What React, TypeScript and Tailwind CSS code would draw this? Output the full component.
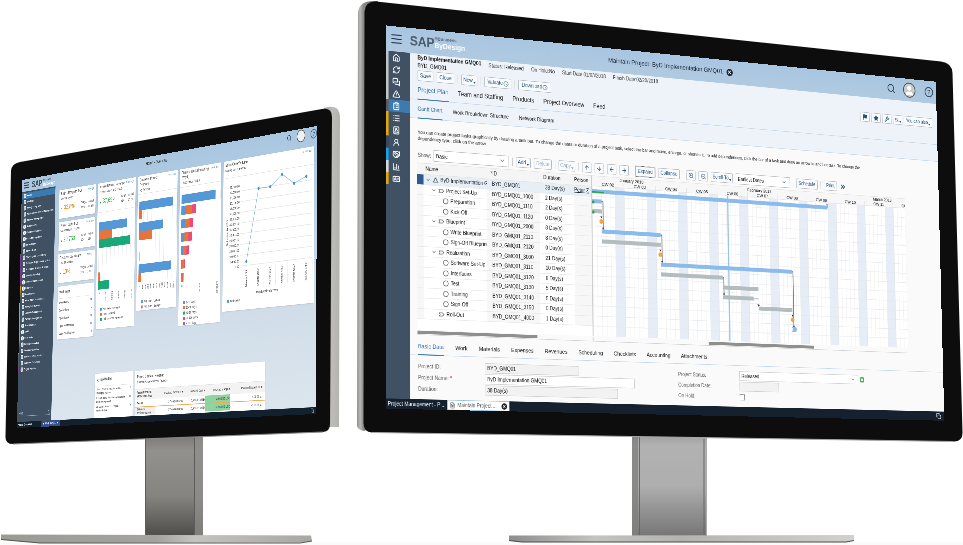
import type { CSSProperties, ReactNode } from "react";
import {
  BarChart3, BookUser, ChevronDown, ChevronsRight, ClipboardList, Clock, Copy, FileText, Flag, Home, IdCard, List,
  ArrowDown, ArrowLeft, ArrowRight, ArrowUp, Handshake, MessagesSquare, RefreshCw, Search, Settings2, Star, User, UserRound,
  Wrench, X, ZoomIn, ZoomOut, TriangleAlert,
} from "lucide-react";

type Point = [number, number];

const SCREEN_W = 1280;
const SCREEN_H = 720;

/** Perspective matrix that lays the flat desktop onto the four corners of a tilted monitor. */
function perspective([p0, p1, p2, p3]: Point[]): CSSProperties {
  const dx1 = p1[0] - p2[0];
  const dx2 = p3[0] - p2[0];
  const sx = p0[0] - p1[0] + p2[0] - p3[0];
  const dy1 = p1[1] - p2[1];
  const dy2 = p3[1] - p2[1];
  const sy = p0[1] - p1[1] + p2[1] - p3[1];
  const den = dx1 * dy2 - dx2 * dy1;
  const g = (sx * dy2 - dx2 * sy) / den;
  const h = (dx1 * sy - sx * dy1) / den;
  const w = SCREEN_W;
  const t = SCREEN_H;
  const m = [
    (p1[0] - p0[0] + g * p1[0]) / w, (p1[1] - p0[1] + g * p1[1]) / w, 0, g / w,
    (p3[0] - p0[0] + h * p3[0]) / t, (p3[1] - p0[1] + h * p3[1]) / t, 0, h / t,
    0, 0, 1, 0,
    p0[0], p0[1], 0, 1,
  ];
  return { transform: `matrix3d(${m.join(",")})` };
}

const LEFT_QUAD: Point[] = [[22, 180], [317, 126], [316, 414], [17, 428]];
const RIGHT_QUAD: Point[] = [[385.6, 25.4], [935.7, 81.7], [944.3, 420.7], [385.7, 408.7]];

/* ------------------------------------------------------------------ */
/* Monitor hardware                                                    */
/* ------------------------------------------------------------------ */

function Hardware() {
  return (
    <svg className="absolute inset-0" width="963" height="545" viewBox="0 0 963 545" aria-hidden="true">
      <defs>
        <linearGradient id="neckL" x1="0" y1="0" x2="0" y2="1">
          <stop offset="0" stopColor="#7c7b79" />
          <stop offset="0.15" stopColor="#92918e" />
          <stop offset="0.6" stopColor="#85847f" />
          <stop offset="1" stopColor="#4e4d4a" />
        </linearGradient>
        <linearGradient id="neckR" x1="0" y1="0" x2="0" y2="1">
          <stop offset="0" stopColor="#a2a2a2" />
          <stop offset="0.1" stopColor="#b2b2b2" />
          <stop offset="0.5" stopColor="#aeaeae" />
          <stop offset="1" stopColor="#767676" />
        </linearGradient>
        <linearGradient id="edgeL" x1="0" y1="0" x2="1" y2="0">
          <stop offset="0" stopColor="#a3a19e" />
          <stop offset="0.5" stopColor="#bebcb9" />
          <stop offset="1" stopColor="#b4b2af" />
        </linearGradient>
        <linearGradient id="edgeR" x1="0" y1="0" x2="1" y2="0">
          <stop offset="0" stopColor="#8c8c8a" />
          <stop offset="0.15" stopColor="#b9b9b7" />
          <stop offset="0.3" stopColor="#8a8a88" />
          <stop offset="1" stopColor="#6a6a68" />
        </linearGradient>
        <linearGradient id="baseL" x1="0" y1="0" x2="1" y2="0">
          <stop offset="0" stopColor="#9b9b96" />
          <stop offset="0.5" stopColor="#a4a39f" />
          <stop offset="0.62" stopColor="#c4c3c0" />
          <stop offset="1" stopColor="#a8a7a3" />
        </linearGradient>
        <linearGradient id="baseR" x1="0" y1="0" x2="1" y2="0">
          <stop offset="0" stopColor="#8d8d8d" />
          <stop offset="0.25" stopColor="#c3c3c2" />
          <stop offset="0.5" stopColor="#b4b3b2" />
          <stop offset="1" stopColor="#d2d1cf" />
        </linearGradient>
      </defs>

      <rect x="0" y="542" width="963" height="3" fill="#fafafa" />
      <rect x="145" y="436" width="58" height="100" fill="url(#neckL)" />
      <rect x="194" y="436" width="9" height="100" fill="#8f8e8b" opacity="0.75" />
      <path d="M145.5 437V535M194.5 437V535" stroke="#5d5c5a" />
      <path d="M1 534.500L311 535.500L312 541L300 542.500L40 543L1 539.500Z" fill="url(#baseL)" />
      <path d="M1 539.500L40 543L300 543L312 541" stroke="#55544f" fill="none" />

      <rect x="632" y="436" width="75" height="100" fill="url(#neckR)" />
      <rect x="632" y="436" width="6" height="100" fill="#80807e" opacity="0.8" />
      <path d="M639.500 437V535M704 439V535" stroke="#666" />
      <path d="M706.500 439V535" stroke="#aaa" />
      <path d="M509 535.500L854 535L854 540L848 542H522L509 540.500Z" fill="url(#baseR)" />
      <path d="M509 540.500L522 542H846L854 540.500" stroke="#4a4a48" fill="none" />

      <path d="M324 108Q340 103 340 118L339 427H326Z" fill="url(#edgeL)" />
      <path d="M20 162L322 109Q332 107.500 332 117L330 424Q330 431.500 323 432L13 444Q5 444 5.500 436L11 171Q11.500 163.500 20 162Z" fill="#0d0d0d" />
      <path d="M13 444L323 432" stroke="#8b8a88" fill="none" />

      <path d="M374 1Q358 1 358 14L357 426Q358 430 364 431L372 428L378 1Z" fill="url(#edgeR)" />
      <path d="M376 1.500L941 61.500Q952 63 952.500 73L962.500 433Q962.500 442 953 441.500L372 432.500Q363.500 432 363.500 423L364.500 12Q365 1 376 1.500Z" fill="#0d0d0d" />
      <path d="M372 432.500L953 441.500" stroke="#a9a9a9" fill="none" />
    </svg>
  );
}

/* ------------------------------------------------------------------ */
/* Left monitor: overview dashboard                                    */
/* ------------------------------------------------------------------ */

const LEFT_NAV = [
  "Home", "Worklists", "Managing My Area", "Application and User Management", "Account Management", "Sales Orders",
  "Customer Invoicing", "Project Management", "Project Team", "Service Desk", "Sourcing and Contracting",
  "Purchase Requests and Orders", "Goods and Services Receipts", "Supplier Invoicing", "Financial Management", "Programs",
  "Receivables", "Fixed Asset Accounting", "Managing Payables", "Liquidity Management", "Payment Management",
  "General Ledger", "Audit", "Cost Tasks", "Inventory Valuation", "Company Structure", "Business Event Monitor",
  "Business Framework", "Project Portfolio",
];

function leftStripe(i: number) {
  if (i === 28 || (i >= 10 && i < 15)) return "bg-[#7b3a94]";
  if (i >= 5 && i < 8) return "bg-[#1b9bdc]";
  if (i >= 15 && i < 26) return "bg-[#d9a20b]";
  return "bg-[#52606e]";
}

function LeftSidebar() {
  return (
    <nav aria-label="Work centers" className="flex w-[167px] shrink-0 flex-col bg-[#3f5163] pt-1 text-white">
      {LEFT_NAV.map((label, i) => (
        <a key={label} href="#home" className={`flex h-[18px] items-center gap-1 text-[8px] font-bold whitespace-nowrap ${i === 0 ? "bg-[#3a7bb0]" : ""}`}>
          <span className={`h-full w-1 shrink-0 ${leftStripe(i)}`} />
          <span className="ml-1 h-3 w-3 shrink-0 rounded-sm border-2 border-white bg-[#b9c5d0]" />
          {label}
        </a>
      ))}
      <label className="mx-2 mt-auto mb-4 flex items-center border-b border-[#9fb0c0] text-[10px]">
        <input aria-label="Find" placeholder="Find" className="w-full bg-transparent text-white outline-none placeholder:text-[#c4d0da]" />
        <Search size={12} />
      </label>
    </nav>
  );
}

interface CardProps {
  title: string;
  sub?: string;
  children?: ReactNode;
  className?: string;
  header?: string;
  time?: boolean;
}

function Card({ title, sub, children, className = "", header = "h-[38px]", time = true }: CardProps) {
  return (
    <section className={`bg-white shadow-sm ${className}`}>
      <header className={`px-2 pt-1 ${header}`}>
        <div className="flex justify-between gap-1">
          <h2 className="text-[10px] leading-[13px] text-[#333]">{title}</h2>
          {time && <span className="shrink-0 text-[8px] leading-3 whitespace-nowrap text-[#2b86c5]">2 min ago</span>}
        </div>
        {sub && <p className="text-[9px] leading-4 text-[#333]">{sub}</p>}
      </header>
      {children}
    </section>
  );
}

function Kpi({ value, color, arrow, arrowColor, target, actual }: { value: string; color: string; arrow: string; arrowColor: string; target: string; actual: string }) {
  return (
    <div className="flex h-7 items-center justify-between px-2">
      <strong className={`text-[18px] leading-5 font-normal ${color}`}>
        <span className={`text-[10px] ${arrowColor}`}>{arrow}</span> {value}
      </strong>
      <dl className="grid grid-cols-2 gap-x-2 text-[9px] leading-[14px] text-[#444]">
        <dt>Target</dt>
        <dt>Actual</dt>
        <dd>{target}</dd>
        <dd>{actual}</dd>
      </dl>
    </div>
  );
}

function Bars({ rows }: { rows: { color: string; width: number; gap?: number }[] }) {
  return (
    <div className="bg-[repeating-linear-gradient(90deg,#e8e8e8_0_1px,transparent_1px_18px)]">
      {rows.map((r, i) => (
        <div key={i} style={{ marginTop: r.gap ?? 0, width: r.width }} className={`h-6 ${r.color}`} />
      ))}
    </div>
  );
}

function AxisLabels({ labels }: { labels: string[] }) {
  return (
    <div className="mt-2 flex h-9 justify-between pr-2 text-[8px] leading-[10px] text-[#444]">
      {labels.map((l) => (
        <span key={l} className="[writing-mode:vertical-rl]">{l}</span>
      ))}
    </div>
  );
}

function Legend({ items }: { items: [string, string][] }) {
  return (
    <ul className="mt-1 pl-3 text-[9px] leading-[14px] text-[#333]">
      {items.map(([color, label]) => (
        <li key={label} className="flex items-center gap-1">
          <span className={`h-2 w-2 ${color}`} />
          {label}
        </li>
      ))}
    </ul>
  );
}

const BLUE = "bg-[#5598d8]";
const ORANGE = "bg-[#e8743b]";
const GREEN = "bg-[#19a979]";
const PINK = "bg-[#ed4a7b]";

const STACKS = [[21, 22, 19], [17, 18, 15], [14, 17, 15], [10, 13, 10], [5, 8, 5], [4, 4, 4]];

const LINE: Point[] = [[95, 216], [141, 31], [187, 31], [233, 4], [279, 32], [325, 19]];

function LineCard() {
  return (
    <Card title="Sales Order Volume" sub="During last 6 months" header="h-[46px] border-b border-[#ddd]" className="h-[394px]">
      <svg width="354" height="290" viewBox="0 0 354 290" className="mt-2 text-[9px]" role="img" aria-label="Sales order volume">
        {Array.from({ length: 16 }, (_, i) => (
          <g key={i}>
            <text x="66" y={20 + i * 14} textAnchor="end" fill="#333">{i === 15 ? "0.00" : `${75 - i * 5},000.00`}</text>
            {i % 2 === 1 && <path d={`M70 ${16 + i * 14}H346`} stroke="#d4d4d4" />}
          </g>
        ))}
        <text transform="translate(20 170) rotate(-90)" fill="#333">Net value in USD</text>
        <polyline points={LINE.map((p) => p.join(",")).join(" ")} fill="none" stroke="#8fbde8" strokeWidth="2" />
        {LINE.map(([x, y], i) => (
          <g key={x}>
            <circle cx={x} cy={y} r="4" fill="#4a90d5" />
            <path d={`M${x + 23} 230v54`} stroke="#ccc" />
            <text transform={`translate(${x + 3} 282) rotate(-90)`} fill="#333">{`Month ${i + 1}/17`}</text>
          </g>
        ))}
      </svg>
      <p className="text-center text-[9px] leading-4 text-[#333]">Month/Calendar Year</p>
      <p className="flex items-center gap-1 pl-5 text-[9px] leading-4 text-[#333]">
        <span className={`h-2 w-2 ${BLUE}`} />
        Net value
      </p>
    </Card>
  );
}

function LeftScreen() {
  return (
    <div style={perspective(LEFT_QUAD)} className="absolute top-0 left-0 flex h-[720px] w-[1280px] origin-top-left flex-col overflow-hidden bg-linear-to-b from-[#a9c6e0] via-[#ccdae7] to-[#dde6ee]">
      <header className="flex h-9 shrink-0 items-center">
        <svg width="30" height="20" viewBox="0 0 30 20" className="ml-3" aria-hidden="true">
          <path d="M0 3H24M0 10H24M0 17H24" stroke="#2b3c4d" strokeWidth="3" />
        </svg>
        <b className="ml-2 text-[25px] leading-6 text-[#46525e]">SAP</b>
        <span className="ml-1 flex flex-col">
          <b className="text-[9px] leading-[10px] text-[#46525e]">Business</b>
          <b className="text-[13px] leading-[13px] text-white">ByDesign</b>
        </span>
        <h1 className="flex-1 pl-[420px] text-[12px] text-[#333]">Home - Overview</h1>
        <Search size={18} className="mr-5 shrink-0 text-[#3c4c5c]" />
        <span className="mr-5 h-8 w-8 shrink-0 rounded-full border-2 border-[#555] bg-[#f1f1f1]" />
        <span className="flex h-6 w-6 shrink-0 items-center justify-center rounded-full border-2 border-[#4c5a66] text-[14px] font-bold text-[#4c5a66]">?</span>
      </header>
      <div className="flex min-h-0 flex-1">
        <LeftSidebar />
        <main className="flex-1 overflow-hidden pt-[14px] pr-[10px] pl-5">
          <div className="grid h-[531px] grid-cols-6 items-start gap-[10px]">
            <div className="flex flex-col gap-[10px]">
              <Card title="Project Margin to (FC)" sub="Current Month" className="h-[82px]">
                <Kpi value="32.8%" color="text-[#eb8b1c]" arrow="▼" arrowColor="text-[#d22]" target="65%" actual="32.8%" />
              </Card>
              <Card title="Project Costs (FC)" sub="Current Month, in USD" className="h-[82px]">
                <Kpi value="20,760" color="text-[#27a544]" arrow="▲" arrowColor="text-[#27a544]" target="20K" actual="21K" />
              </Card>
              <Card title="Resource Operating %" sub="Last 12 Months" className="h-[82px]">
                <Kpi value="13%" color="text-[#eb8b1c]" arrow="▲" arrowColor="text-[#27a544]" target="15%" actual="13%" />
              </Card>
              <Card title="Work Items" time={false} header="h-[34px] pt-[10px]" className="h-[150px]">
                <ul className="border-t border-[#e2e2e2] text-[9px] leading-[22px] text-[#222]">
                  {[["Open Items", "26"], ["Open Alerts", "7"], ["Open Tasks", "31"], ["Open Notifications", "12"], ["Open Clarifications", "4"]].map(([l, n]) => (
                    <li key={l} className="flex justify-between px-2">
                      {l}
                      <b className="text-[#3a93cf]">{n}</b>
                    </li>
                  ))}
                </ul>
              </Card>
            </div>
            <Card title="Invoiced Project Revenue" sub="Current Month (FC, USD)" className="h-[408px]">
              <Kpi value="37,699" color="text-[#27a544]" arrow="▲" arrowColor="text-[#27a544]" target="35K" actual="37.6K" />
              <div className="mt-4 border-t border-[#ddd] pl-2">
                <Bars rows={[{ color: BLUE, width: 129, gap: 27 }, { color: ORANGE, width: 61 }, { color: GREEN, width: 143 }, { color: ORANGE, width: 9, gap: 68 }, { color: GREEN, width: 50 }]} />
                <AxisLabels labels={["0", "10,000", "20,000", "30,000", "40,000", "50,000"]} />
                <Legend items={[[BLUE, "Net Value Revenue"], [ORANGE, "Cost Invoiced"], [GREEN, "Unit Invoiced Revenue"]]} />
              </div>
            </Card>
            <Card title="Customer Project Overview" sub="My Projects" header="h-[50px] border-b border-[#ddd]" className="h-[368px]">
              <div className="pl-2">
                <Bars rows={[{ color: BLUE, width: 147, gap: 20 }, { color: ORANGE, width: 11 }, { color: BLUE, width: 104, gap: 10 }, { color: ORANGE, width: 56 }, { color: "bg-[#f3b596]", width: 5, gap: 32 }, { color: BLUE, width: 141, gap: 10 }, { color: ORANGE, width: 10 }]} />
                <AxisLabels labels={["0", "10K", "20K", "30K", "40K", "50K", "60K", "70K", "80K", "90K", "100K", "110K", "120K"]} />
                <Legend items={[[BLUE, "PM: Sum - Labour"], [ORANGE, "PM: Sum - Budget"]]} />
              </div>
            </Card>
            <Card title="Planned Work Remaining (Week)" sub="Last 12 Mon / FBIS" header="h-[50px] border-b border-[#ddd]" className="h-[420px]">
              <div className="pl-2">
                <Bars rows={[{ color: BLUE, width: 142, gap: 20 }]} />
                <div className="mt-[6px] flex flex-col gap-3">
                  {STACKS.map(([b, o, p]) => (
                    <div key={b} className="flex h-6">
                      <span style={{ width: b }} className={BLUE} />
                      <span style={{ width: o }} className={ORANGE} />
                      <span style={{ width: p }} className={PINK} />
                    </div>
                  ))}
                </div>
                <AxisLabels labels={["0", "500.00", "1,000.00"]} />
                <Legend items={[[BLUE, "1-30 days"], [ORANGE, "31-60 days"], [GREEN, "61-90 days"], [PINK, "91-120 days"], ["bg-[#945ecf]", "> 120 days"]]} />
              </div>
            </Card>
            <div className="col-span-2">
              <LineCard />
            </div>
          </div>
          <div className="grid grid-cols-6 gap-[10px]">
            <Card title="My Top Worklist" time={false} header="h-[34px] pt-[10px]" className="col-start-2 h-[130px]">
              <ul className="border-t border-[#e2e2e2] px-2 pt-1 text-[8px] leading-[10px] text-[#222]">
                {[["Select Sales or Requirements - Managing My Area", "3"], ["Project Tasks - Worker - Applications Data Management", "12"], ["All Current Projects - Project Administration", "5"]].map(([l, n]) => (
                  <li key={l} className="mb-1 flex justify-between gap-2">
                    {l}
                    <b className="text-[#3a93cf]">{n}</b>
                  </li>
                ))}
              </ul>
            </Card>
            <Card title="Project Cost and Revenue" sub="Current Period - Service Projects" time={false} header="h-[50px] pt-[10px] border-b border-[#ddd]" className="col-span-3 h-[130px]">
              <table className="w-full text-right text-[9px] leading-[10px] text-[#333]">
                <thead className="bg-[#f3f3f3]">
                  <tr className="h-7">
                    <th className="w-[90px] pl-2 text-left">Project/Project Work Data Area</th>
                    <th className="font-normal">Invoiced Revenue ▾</th>
                    <th className="font-normal">Invoiced Cost ▾</th>
                    <th className="font-normal">Invoiced Margin ▾</th>
                    <th className="pr-3 font-normal">Invoiced Margin % ▾</th>
                  </tr>
                </thead>
                <tbody>
                  <tr className="h-5 border-b-2 border-[#f0ab5b]">
                    <th className="pl-2 text-left">Result</th>
                    <td>37,468.00 USD</td>
                    <td>3,263.01 USD</td>
                    <td className="bg-[#8fd4a0]">-3,566.50 USD</td>
                    <td className="pr-3">-3.09 % <span className="text-[#27a544]">▲</span></td>
                  </tr>
                  <tr className="h-5">
                    <td className="bg-[#f0f0f0] pl-2 text-left">Services Implementation</td>
                    <td>37,468.00 USD</td>
                    <td>3,263.01 USD</td>
                    <td className="bg-[#8fd4a0]">-3,566.50 USD</td>
                    <td className="pr-3">-3.09 % <span className="text-[#27a544]">▲</span></td>
                  </tr>
                </tbody>
              </table>
            </Card>
          </div>
        </main>
      </div>
      <footer className="flex h-[17px] shrink-0 items-center bg-[#13212f] text-[9px] font-bold text-white">
        <span className="w-[120px] pl-1">Home: Overview</span>
        <span className="flex h-full items-center gap-2 bg-[#33528d] px-2">■ Work Proje... ✕</span>
        <Copy size={11} className="mr-2 ml-auto" />
      </footer>
    </div>
  );
}

/* ------------------------------------------------------------------ */
/* Right monitor: project plan                                         */
/* ------------------------------------------------------------------ */

const SIDE_ICONS = [
  { Icon: Home, label: "Home", stripe: "bg-[#bfc4c8]" },
  { Icon: RefreshCw, label: "Feed", stripe: "bg-[#bfc4c8]" },
  { Icon: MessagesSquare, label: "Worklist", stripe: "bg-[#bfc4c8]" },
  { Icon: TriangleAlert, label: "Managing My Area", stripe: "bg-[#bfc4c8]" },
  { Icon: ClipboardList, label: "Project Management", stripe: "bg-[#5b5b5b]" },
  { Icon: List, label: "Project Team", stripe: "bg-[#e2a60f]" },
  { Icon: BookUser, label: "Documents", stripe: "bg-[#e2a60f]" },
  { Icon: UserRound, label: "Resources", stripe: "bg-[#34495c]" },
  { Icon: Handshake, label: "Partners", stripe: "bg-[#16a2e8]" },
  { Icon: BarChart3, label: "Reports", stripe: "bg-[#d4d7da]" },
  { Icon: IdCard, label: "Personnel", stripe: "bg-[#e2a60f]" },
];

function Btn({ children, className = "", muted = false, label }: { children: ReactNode; className?: string; muted?: boolean; label?: string }) {
  return (
    <button type="button" aria-label={label} className={`flex h-5 shrink-0 items-center justify-center gap-px rounded-xs border border-[#b3b9bf] bg-[#fafbfc] text-[10px] leading-3 whitespace-nowrap ${muted ? "text-[#94abc0]" : "text-[#23527f]"} ${className}`}>
      {children}
    </button>
  );
}

function Caret() {
  return (
    <svg width="5" height="4" viewBox="0 0 5 4" className="mt-2 shrink-0" aria-hidden="true">
      <path d="M0 0H5L3 4Z" fill="currentColor" />
    </svg>
  );
}

function Sep() {
  return <span className="h-4 w-px shrink-0 bg-[#c3c9d0]" />;
}

function Tabs({ items, className }: { items: string[]; className: string }) {
  return (
    <nav className={`flex shrink-0 border-b border-[#c3d6e9] px-4 text-[#222] ${className}`}>
      {items.map((t, i) => (
        <a key={t} href="#tab" className={`-mb-px flex items-center ${i === 0 ? "border-b-2 border-[#3f7cb3] text-[#2f6fa8]" : ""}`}>
          {t}
        </a>
      ))}
    </nav>
  );
}

type Row = [name: string, id: string, days: number, level: 0 | 1 | 2, kind: "root" | "phase" | "task"];

const ROWS: Row[] = [
  ["ByD Implementation GMQ01", "BYD_GMQ01", 38, 0, "root"],
  ["Project Set-Up", "BYD_GMQ01_1000", 2, 1, "phase"],
  ["Preparation", "BYD_GMQ01_1110", 2, 2, "task"],
  ["Kick-Off", "BYD_GMQ01_1120", 0, 2, "task"],
  ["Blueprint", "BYD_GMQ01_2000", 8, 1, "phase"],
  ["Write Blueprint", "BYD_GMQ01_2110", 8, 2, "task"],
  ["Sign-Off Blueprint", "BYD_GMQ01_2120", 0, 2, "task"],
  ["Realization", "BYD_GMQ01_3000", 21, 1, "phase"],
  ["Software Set-Up", "BYD_GMQ01_3110", 10, 2, "task"],
  ["Interfaces", "BYD_GMQ01_3120", 6, 2, "task"],
  ["Test", "BYD_GMQ01_3130", 5, 2, "task"],
  ["Training", "BYD_GMQ01_3140", 5, 2, "task"],
  ["Sign-Off", "BYD_GMQ01_3150", 0, 2, "task"],
  ["Roll-Out", "BYD_GMQ01_4000", 1, 1, "phase"],
];

const INDENT = ["pl-1", "pl-4", "pl-10"];

function TaskIcon({ kind }: { kind: Row[4] }) {
  const d = kind === "root" ? "M1 10H11L8.500 7V5L6 2L3.500 5V7Z" : kind === "phase" ? "M1 3H8L11 6L8 9H1L3 6Z" : "M6 1A5 5 0 1 0 6 11A5 5 0 1 0 6 1";
  return (
    <svg width="12" height="12" viewBox="0 0 12 12" className="shrink-0" aria-hidden="true">
      <path d={d} fill="none" stroke="#555" strokeWidth="1.200" />
    </svg>
  );
}

function TaskTable() {
  return (
    <table className="h-[295px] w-[374px] table-fixed border-collapse text-left text-[10px] leading-3 text-[#111]">
      <colgroup>
        <col className="w-[13px]" />
        <col className="w-[133px]" />
        <col className="w-[114px]" />
        <col className="w-[76px]" />
        <col className="w-[38px]" />
      </colgroup>
      <thead>
        <tr className="h-[21px] border-y border-[#e4e4e4] bg-[#f5f5f5]">
          <th aria-label="Selection" />
          <th className="pl-1 font-normal">Name</th>
          <th className="pl-2 font-normal"><span className="text-[#c22]">*</span>ID</th>
          <th className="pl-2 font-normal">Duration</th>
          <th className="font-normal">Person</th>
        </tr>
      </thead>
      <tbody>
        {ROWS.map(([name, id, days, level, kind], i) => (
          <tr key={id} className={`border-b border-[#e9e9e9] ${i === 0 ? "bg-[#e6eef6]" : "bg-[#f7f7f7]"}`}>
            <td className={i === 0 ? "bg-[#2c5c8f]" : ""} />
            <td className={`overflow-hidden whitespace-nowrap ${INDENT[level]} ${i ? "bg-white" : ""}`}>
              <span className="flex items-center gap-1">
                {kind !== "task" && id !== "BYD_GMQ01_4000" && <ChevronDown size={11} strokeWidth={2} className="shrink-0 text-[#555]" />}
                {id === "BYD_GMQ01_4000" && <span className="w-[11px]" />}
                <TaskIcon kind={kind} />
                {name}
              </span>
            </td>
            <td className="overflow-hidden pl-[11px] whitespace-nowrap">{id}</td>
            <td className={`pl-3 whitespace-nowrap ${i ? "bg-white" : ""}`}>{days} Day(s)</td>
            <td className="overflow-hidden whitespace-nowrap">{i === 0 && <u>Peter Z</u>}</td>
          </tr>
        ))}
      </tbody>
    </table>
  );
}

const ROW_H = 274 / 14;
const cy = (r: number) => (r + 0.5) * ROW_H;

const GANTT: [row: number, from: number, to: number, color: string][] = [
  [0, 0, 554, "#8bbbec"], [1, 0, 21, "#8bbbec"], [2, 0, 21, "#b3bcbe"], [4, 21, 154, "#8bbbec"], [5, 21, 154, "#b3bcbe"],
  [7, 154, 463, "#8bbbec"], [8, 154, 298, "#b3bcbe"], [9, 298, 382, "#b3bcbe"], [10, 298, 370, "#b3bcbe"], [11, 382, 463, "#b3bcbe"],
];

const LINKS: [x: number, from: number, to: number][] = [[24, 1, 4], [157, 4, 7], [300, 8, 10], [466, 7, 13], [382, 10.6, 11]];

function Gantt() {
  return (
    <div className="w-[753px] shrink-0 overflow-hidden border-l-2 border-[#cfcfcf]">
      <div className="flex h-[21px] flex-col border-y border-[#e4e4e4] bg-[#f7f7f7] text-[9px] leading-[10px] text-[#111]">
        <div className="flex pl-[62px]">
          <span className="w-[297px]">January 2018</span>
          <span className="w-[310px]">February 2018</span>
          <span className="whitespace-nowrap">March 2018</span>
        </div>
        <div className="flex">
          {Array.from({ length: 11 }, (_, i) => (
            <span key={i} className="w-[72px] shrink-0 border-r border-[#e4e4e4] text-center">CW {String(i + 2).padStart(2, "0")}</span>
          ))}
        </div>
      </div>
      <svg width="753" height="293" viewBox="0 0 753 293" role="img" aria-label="Gantt chart" className="bg-white">
        {Array.from({ length: 11 }, (_, w) => (
          <g key={w}>
            <rect x={w * 72 + 51} y="0" width="21" height="293" fill="#e6edf6" />
            {[0, 1, 2, 3, 4].map((d) => (
              <path key={d} d={`M${w * 72 + d * 10.3} 0V293`} stroke={d ? "#f0f0f0" : "#dcdcdc"} />
            ))}
          </g>
        ))}
        {ROWS.map((r, i) => (
          <path key={r[1]} d={`M0 ${(i + 1) * ROW_H}H753`} stroke="#e6e8eb" />
        ))}
        <path d="M312 0V293" stroke="#9cc3e6" strokeWidth="3" />
        {LINKS.map(([x, a, b]) => (
          <g key={x} stroke="#555">
            <path d={`M${x - 3} ${cy(a)}H${x}V${cy(b) - 5}`} fill="none" strokeWidth="1.500" />
            <path d={`M${x - 2} ${cy(b) - 7}h4l-2 3z`} fill="#222" />
          </g>
        ))}
        <path d={`M370 ${cy(10)}h12`} stroke="#b3bcbe" strokeWidth="2" />
        {GANTT.map(([r, a, b, c]) => (
          <rect key={r} x={a} y={cy(r) - 4} width={b - a} height="8" fill={c} />
        ))}
        <path d={`M550 ${cy(0) - 8}h6v12z`} fill="#8bbbec" />
        <rect x="0" y={cy(0)} width="27" height="3" fill="#2da64b" />
        <circle cx="2" cy={cy(1) + 2} r="3" fill="#2da64b" />
        <circle cx="2" cy={cy(2) + 2} r="3" fill="#2da64b" />
        {[[20, 3], [153, 6], [463, 12]].map(([x, r]) => (
          <g key={r}>
            <circle cx={x} cy={cy(r)} r="4.500" fill="#f5a33a" />
            <path d={`M${x - 2} ${cy(r) - 10}h4l-2 4z`} fill="#333" />
          </g>
        ))}
        <path d={`M461 ${cy(13) - 5}h10l3 5l-3 5h-10l3-5z`} fill="#8bbbec" />
      </svg>
    </div>
  );
}

function Field({ id, label, value, className, required }: { id: string; label: string; value: string; className: string; required?: boolean }) {
  return (
    <div className="flex h-[21px] items-center">
      <label htmlFor={id} className="w-[139px] text-[#5c5c5c]">
        {label}:{required && <b className="text-[#c22]"> *</b>}
      </label>
      <input id={id} defaultValue={value} className={`h-[19px] border border-[#cfcfcf] px-1 text-[#111] ${className}`} />
    </div>
  );
}

function RightScreen() {
  return (
    <div style={perspective(RIGHT_QUAD)} className="absolute top-0 left-0 flex h-[720px] w-[1280px] origin-top-left flex-col overflow-hidden bg-[#fafafa]">
      <header className="flex h-12 shrink-0 items-center bg-linear-to-b from-[#a8c5e1] to-[#b0cae0]">
        <svg width="22" height="18" viewBox="0 0 22 18" className="ml-3" aria-hidden="true">
          <path d="M0 1.500H21M0 9H21M0 16.500H21" stroke="#22364a" strokeWidth="2" />
        </svg>
        <b className="ml-4 text-[25px] leading-7 text-[#4d5b6b]">SAP</b>
        <span className="flex flex-col">
          <b className="text-[9px] leading-[11px] text-[#5a6878]">®Business</b>
          <b className="text-[14px] leading-[15px] text-white">ByDesign</b>
        </span>
        <h1 className="flex flex-1 items-center gap-2 pl-[314px] text-[13px] text-[#22303d]">
          Maintain Project: ByD Implementation GMQ01
          <span className="flex h-[15px] w-[15px] items-center justify-center rounded-full bg-[#1e2a36] text-white"><X size={10} strokeWidth={4} /></span>
        </h1>
        <Search size={22} className="mr-5 text-[#2c3c4c]" />
        <span className="mr-6 flex h-8 w-8 items-end justify-center overflow-hidden rounded-full border-2 border-[#4c4c4c] bg-[#c9c9c9]">
          <User size={26} fill="#fff" className="text-white" />
        </span>
        <span className="mr-2 flex h-[22px] w-[22px] items-center justify-center rounded-full border-2 border-[#3c4c5c] text-[15px] text-[#2c3946]">?</span>
      </header>
      <div className="flex min-h-0 flex-1">
        <nav aria-label="Work centers" className="w-[50px] shrink-0 bg-[#3f5163]">
          {SIDE_ICONS.map(({ Icon, label, stripe }, i) => (
            <a key={label} href="#work-center" aria-label={label} className={`flex h-[23px] items-center text-white ${i === 4 ? "bg-[#3d7ab0]" : ""}`}>
              <span className={`h-full w-[6px] ${stripe}`} />
              <Icon size={16} strokeWidth={2.5} className="ml-2" />
            </a>
          ))}
        </nav>
        <main className="flex min-w-0 flex-1 flex-col overflow-hidden">
          <div className="shrink-0 bg-[#edf3f9]">
            <div className="flex h-8 px-4 text-[10px] leading-[15px] text-[#444]">
              <div className="w-[150px] whitespace-nowrap text-[#111]">
                <b>ByD Implementation GMQ01</b>
                <p>BYD_GMQ01</p>
              </div>
              <div className="flex gap-4 pt-[2px] whitespace-nowrap">
                <p>Status: <span className="text-[#111]">Released</span></p>
                <p>On Hold:<span className="text-[#111]">No</span></p>
                <p>Start Date 01/03/2018</p>
                <p>Finish Date:02/20/2018</p>
              </div>
            </div>
            <div className="flex h-5 items-center gap-[7px] pr-3 pl-4">
              <Btn className="w-[33px]">Save</Btn>
              <Btn className="w-[37px]">Close</Btn>
              <Sep />
              <Btn className="w-[34px]">New<Caret /></Btn>
              <Sep />
              <Btn className="w-[58px]">Valuate <Clock size={11} /></Btn>
              <Sep />
              <Btn className="w-[72px]">Download <Clock size={11} /></Btn>
              <div className="ml-auto flex gap-1">
                <Btn className="w-6" label="Flag"><Flag size={13} fill="currentColor" /></Btn>
                <Btn className="w-6" label="Favorite"><Star size={13} fill="currentColor" /></Btn>
                <Btn className="w-6" label="Tools"><Wrench size={13} /></Btn>
                <Btn className="w-6" label="Adapt"><Settings2 size={11} /><Caret /></Btn>
                <Btn className="w-[74px]">You can also<Caret /></Btn>
              </div>
            </div>
            <Tabs items={["Project Plan", "Team and Staffing", "Products", "Project Overview", "Feed"]} className="h-9 gap-5 text-[12px]" />
            <Tabs items={["Gantt Chart", "Work Breakdown Structure", "Network Diagram"]} className="h-9 gap-[22px] text-[10px]" />
          </div>

          <p className="mt-5 shrink-0 pl-4 text-[9px] leading-3 whitespace-nowrap text-[#222]">
            You can create project tasks graphically by drawing a task bar. To change the dates or duration of a project task, select the bar and move, enlarge, or shorten it. To add dependencies, click the bar of a task and draw an arrow to another task. To change the
            <br />
            dependency type, click on the arrow.
          </p>

          <div className="mt-[14px] flex h-[22px] shrink-0 items-center gap-[7px] pl-4 text-[10px]">
            <label htmlFor="show" className="w-[26px] text-[#555]">Show:</label>
            <div className="relative w-[160px]">
              <select id="show" className="h-[22px] w-full appearance-none border border-[#bbb] bg-white px-1 text-[#111]">
                <option>Basic</option>
              </select>
              <ChevronDown size={13} className="absolute top-1 right-2 text-[#4a6b8c]" />
            </div>
            <Sep />
            <Btn className="w-8">Add<Caret /></Btn>
            <Btn className="w-[39px]" muted>Delete</Btn>
            <Sep />
            <Btn className="w-[37px]" muted>Copy<Caret /></Btn>
            <Sep />
            {[ArrowUp, ArrowDown, ArrowLeft, ArrowRight].map((Arrow, i) => (
              <Btn key={i} className="w-[21px]" label={["Move up", "Move down", "Outdent", "Indent"][i]}><Arrow size={13} className="shrink-0" /></Btn>
            ))}
            <Sep />
            <Btn className="w-[45px] outline outline-dotted outline-[#444]">Expand</Btn>
            <Btn className="w-[50px]">Collapse</Btn>
            <Sep />
            <Btn className="w-[22px]" label="Zoom in"><ZoomIn size={13} className="shrink-0" /></Btn>
            <Btn className="w-[22px]" label="Zoom out"><ZoomOut size={13} className="shrink-0" /></Btn>
            <Btn className="w-[52px]">Scroll To<Caret /></Btn>
            <div className="relative w-[131px]">
              <select aria-label="Dates" className="h-[22px] w-full appearance-none border border-[#bbb] bg-white px-1 text-[#111]">
                <option>Earliest Dates</option>
              </select>
              <ChevronDown size={13} className="absolute top-1 right-2 text-[#4a6b8c]" />
            </div>
            <Sep />
            <Btn className="w-[53px]">Schedule</Btn>
            <Sep />
            <Btn className="w-[33px]">Print</Btn>
            <ChevronsRight size={16} strokeWidth={3} className="text-[#23527f]" />
          </div>

          <div className="mt-1 ml-[15px] flex h-[315px] shrink-0">
            <div className="w-[374px] shrink-0 bg-white"><TaskTable /></div>
            <Gantt />
          </div>
          <div className="ml-[15px] flex h-[10px] w-[1127px] shrink-0 border-b border-[#cfcfcf] pt-[2px]">
            <div className="w-[374px]"><div className="h-[6px] w-[253px] bg-[#8f8f8f]" /></div>
            <div className="flex-1 border-l-2 border-[#cfcfcf] pl-[262px]"><div className="h-[6px] w-[252px] bg-[#8f8f8f]" /></div>
          </div>

          <Tabs items={["Basic Data", "Work", "Materials", "Expenses", "Revenues", "Scheduling", "Checklists", "Accounting", "Attachments"]} className="mt-[7px] h-[31px] gap-6 text-[11px]" />

          <div className="flex pt-[10px] pl-4 text-[10px]">
            <div className="w-[565px]">
              <Field id="project-id" label="Project ID" value="BYD_GMQ01" className="w-[202px] bg-[#f2f2f2]" />
              <Field id="project-name" label="Project Name" value="ByD Implementation GMQ01" className="w-[327px] bg-white" required />
              <Field id="duration" label="Duration" value="38 Day(s)" className="w-[289px] bg-[#f2f2f2]" />
            </div>
            <div>
              <div className="flex h-[21px] items-center">
                <label htmlFor="status" className="w-[143px] text-[#5c5c5c]">Project Status:</label>
                <div className="relative">
                  <select id="status" className="h-[19px] w-[289px] appearance-none border border-[#cfcfcf] bg-white px-1 text-[#111]">
                    <option>Released</option>
                  </select>
                  <ChevronDown size={11} className="absolute top-1 right-2 text-[#4a6b8c]" />
                </div>
                <span className="ml-1 h-[11px] w-[11px] rounded-sm border-3 border-[#4caf50] bg-white" />
              </div>
              <div className="flex h-[21px] items-center">
                <label htmlFor="completion" className="w-[143px] text-[#5c5c5c]">Completion Date:</label>
                <input id="completion" className="h-[19px] w-[94px] border border-[#cfcfcf] bg-[#f2f2f2]" />
              </div>
              <div className="flex h-[21px] items-center">
                <label htmlFor="hold" className="w-[143px] text-[#5c5c5c]">On Hold:</label>
                <input id="hold" type="checkbox" className="h-3 w-3 appearance-none border border-[#888] bg-white" />
              </div>
            </div>
          </div>
        </main>
      </div>
      <footer className="flex h-[19px] shrink-0 items-center bg-[#15212e] text-[10px] text-white">
        <span className="w-[126px] pl-1 whitespace-nowrap">Project Management - P ...</span>
        <span className="flex h-full w-[131px] items-center gap-1 border border-[#8fc0e8] bg-white px-1 whitespace-nowrap text-[#5a5a5a]">
          <FileText size={12} />
          <span className="flex-1">Maintain Project ...</span>
          <span className="flex h-3 w-3 items-center justify-center rounded-full bg-[#222] text-white"><X size={8} strokeWidth={4} /></span>
        </span>
        <Copy size={13} className="mr-2 ml-auto" />
      </footer>
    </div>
  );
}

export default function App() {
  return (
    <div className="min-h-screen overflow-hidden bg-white font-['Liberation_Sans',Arial,sans-serif]">
      <div className="relative h-[545px] overflow-hidden">
        <Hardware />
        <LeftScreen />
        <RightScreen />
      </div>
    </div>
  );
}
